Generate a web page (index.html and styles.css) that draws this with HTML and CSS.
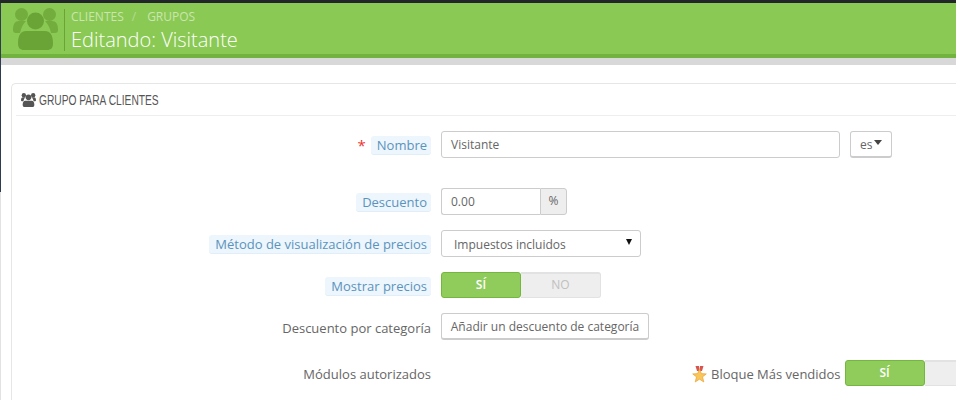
FILE: index.html
```html
<!DOCTYPE html>
<html lang="es">
<head>
<meta charset="utf-8">
<title>Editando: Visitante</title>
<link rel="stylesheet" href="styles.css">
</head>
<body>
<div class="page">
  <div class="edge"></div>
  <header class="head">
    <svg class="head-icon" viewBox="0 0 45 42" aria-hidden="true">
      <circle class="i2" cx="8.500" cy="6.500" r="6.500"/>
      <circle class="i2" cx="36.500" cy="6.500" r="6.500"/>
      <path class="i2" d="M0 22c0-6 2-9 6-9h7c-3 3-5 7-6 12H3c-2 0-3-1-3-3zM45 22c0-6-2-9-6-9h-7c3 3 5 7 6 12h4c2 0 3-1 3-3z"/>
      <circle class="i1" cx="22.500" cy="13" r="8.500"/>
      <path class="i1" d="M5 35c0-8 3-12 8-12h19c5 0 8 4 8 12 0 5-2 7-6 7H11c-4 0-6-2-6-7z"/>
    </svg>
    <div class="head-text">
      <div class="crumbs"><span>CLIENTES</span><span class="sep">/</span><span>GRUPOS</span></div>
      <h1>Editando: Visitante</h1>
    </div>
  </header>
  <div class="strip"></div>
  <section class="panel">
    <h2 class="panel-head">
      <svg class="small-icon" viewBox="0 0 45 42" aria-hidden="true">
        <circle cx="8.500" cy="6.500" r="6.500"/>
        <circle cx="36.500" cy="6.500" r="6.500"/>
        <path d="M0 22c0-6 2-9 6-9h7c-3 3-5 7-6 12H3c-2 0-3-1-3-3zM45 22c0-6-2-9-6-9h-7c3 3 5 7 6 12h4c2 0 3-1 3-3z"/>
        <circle cx="22.500" cy="13" r="8.500"/>
        <path d="M5 35c0-8 3-12 8-12h19c5 0 8 4 8 12 0 5-2 7-6 7H11c-4 0-6-2-6-7z"/>
      </svg>
      <span class="panel-title">GRUPO PARA CLIENTES</span>
    </h2>
    <div class="form">
      <div class="row row-name">
        <div class="label"><span class="req">*</span><span class="hint">Nombre</span></div>
        <div class="control">
          <div class="input input-name">Visitante</div>
          <div class="lang">es<span class="caret"></span></div>
        </div>
      </div>
      <div class="row row-disc">
        <div class="label"><span class="hint">Descuento</span></div>
        <div class="control">
          <div class="input input-disc">0.00</div><div class="addon">%</div>
        </div>
      </div>
      <div class="row row-method">
        <div class="label"><span class="hint">Método de visualización de precios</span></div>
        <div class="control">
          <div class="select">Impuestos incluidos<span class="select-caret"></span></div>
        </div>
      </div>
      <div class="row row-show">
        <div class="label"><span class="hint">Mostrar precios</span></div>
        <div class="control">
          <div class="toggle"><span class="on">SÍ</span><span class="off">NO</span></div>
        </div>
      </div>
      <div class="row row-cat">
        <div class="label">Descuento por categoría</div>
        <div class="control"><div class="btn">Añadir un descuento de categoría</div></div>
      </div>
      <div class="row row-mod">
        <div class="label">Módulos autorizados</div>
        <div class="control module">
          <svg class="medal" viewBox="0 0 15 17" aria-hidden="true">
            <path fill="#d9534f" d="M3.500 0h3.500l.5 5H5zM8 0h3.500L10 5H7.500z"/>
            <path fill="#f9c65a" stroke="#e8a33a" stroke-width=".7" d="M7.500 3l1.900 4.600 4.900.3-3.800 3 1.300 5.100-4.300-2.800-4.300 2.800 1.300-5.100-3.800-3 4.900-.3z"/>
          </svg>
          <span class="module-name">Bloque Más vendidos</span>
          <div class="toggle toggle-cut"><span class="on">SÍ</span><span class="off"></span></div>
        </div>
      </div>
    </div>
  </section>
</div>
</body>
</html>
```
FILE: styles.css
```css
* { box-sizing: border-box; }
html, body { margin: 0; height: 400px; overflow: hidden; background: #fff; }
body { font-family: "Open Sans", sans-serif; font-size: 12px; color: #666; border-top: 3px solid #22262b; }
.page { width: 956px; position: relative; }
.edge {
  position: absolute;
  left: 0;
  top: 0;
  width: 1px;
  height: 397px;
  background: linear-gradient(#2f3b4f 0 189px, #e2e2e2 189px);
}
.head {
  height: 55px;
  background: #8bc955;
  border-bottom: 4px solid #72b23e;
  display: flex;
  align-items: flex-start;
  padding: 5px 0 0 13px;
}
.head-icon { width: 45px; height: 42px; flex: none; }
.i1 { fill: #6aa437; }
.i2 { fill: #72ad3e; }
.head-text { margin-left: 6px; border-left: 1px solid #6aa437; height: 42px; padding-left: 6px; margin-top: 1px; }
.crumbs { font-size: 12px; line-height: 16px; color: #c9e6ae; }
.sep { margin: 0 11px 0 8px; color: #b5db92; }
h1 { margin: 3px 0 0; font-size: 20px; line-height: 24px; font-weight: 300; color: #fff; white-space: nowrap; }
.strip { height: 7px; background: #d8d8d8; }
.panel {
  margin: 18px 0 0 11px;
  background: #fff;
  border: 1px solid #e6e6e6;
  border-right: 0;
  border-radius: 5px 0 0 5px;
  padding: 0 0 0 4px;
  height: 330px;
}
.panel-head {
  margin: 0;
  height: 32px;
  border-bottom: 1px solid #eee;
  display: flex;
  align-items: center;
  gap: 3px;
  font-weight: 400;
  color: #555;
  padding-left: 5px;
}
.panel-title {
  font-family: "Liberation Sans", sans-serif;
  font-size: 14px;
  white-space: nowrap;
  transform: scaleX(.73);
  transform-origin: left center;
}
.small-icon { width: 15px; height: 14px; fill: #555; flex: none; }
.form { display: flex; flex-direction: column; }
.row { display: flex; align-items: center; }
.label { width: 415px; padding-top: 2px; text-align: right; font-size: 13px; color: #666; flex: none; display: flex; justify-content: flex-end; align-items: center; }
.control { margin-left: 10px; display: flex; align-items: center; }
.hint {
  background: #edf6fc;
  border-bottom: 1px solid #dfeef8;
  color: #5b93bd;
  padding: 0 4px 0 6px;
  border-radius: 3px;
  height: 19px;
  line-height: 18px;
  font-size: 13px;
  display: block;
}
.req { color: #e33; font-size: 15px; margin-right: 5px; line-height: 15px; }
.row-name { margin-top: 15px; height: 27px; }
.row-disc { margin-top: 30px; height: 27px; }
.row-method { margin-top: 15px; height: 27px; }
.row-show { margin-top: 15px; height: 26px; }
.row-cat { margin-top: 15px; height: 27px; }
.row-mod { margin-top: 20px; height: 26px; }
.input {
  height: 27px;
  border: 1px solid #ccc;
  border-radius: 3px;
  padding: 0 9px;
  line-height: 25px;
  font-size: 12px;
  background: #fff;
}
.input-name { width: 399px; }
.lang {
  width: 42px;
  height: 27px;
  margin-left: 10px;
  border: 1px solid #ccc;
  border-bottom-width: 2px;
  border-radius: 3px;
  padding-left: 9px;
  display: flex;
  align-items: center;
  gap: 2px;
}
.caret { width: 0; height: 0; border-left: 4px solid transparent; border-right: 4px solid transparent; border-top: 5px solid #444; margin-top: -4px; }
.input-disc { width: 99px; border-radius: 3px 0 0 3px; border-right: 0; }
.addon {
  width: 27px;
  height: 27px;
  border: 1px solid #ccc;
  border-radius: 0 3px 3px 0;
  background: #eee;
  text-align: center;
  line-height: 24px;
  font-size: 12px;
}
.select {
  width: 200px;
  height: 27px;
  border: 1px solid #ccc;
  border-radius: 3px;
  padding-left: 12px;
  line-height: 27px;
  font-size: 12px;
  position: relative;
}
.select-caret { position: absolute; right: 8px; top: 8px; width: 0; height: 0; border-left: 3.500px solid transparent; border-right: 3.500px solid transparent; border-top: 6px solid #111; }
.toggle { display: flex; width: 160px; height: 26px; font-size: 12px; font-weight: 600; line-height: 24px; text-align: center; flex: none; }
.toggle-cut { width: 111px; }
.toggle-cut .off { width: 31px; border-right: 0; border-radius: 0; }
.on { width: 80px; background: #8fcc5c; border: 1px solid #74b73f; border-radius: 3px; color: #fff; }
.off { width: 80px; background: #eee; border-top: 2px solid #e2e2e2; border-right: 1px solid #e2e2e2; border-bottom: 1px solid #e2e2e2; border-radius: 0 3px 3px 0; color: #c0c0c0; font-weight: 400; line-height: 22px; }
.btn {
  width: 208px;
  height: 27px;
  border: 1px solid #ccc;
  border-bottom-width: 2px;
  border-radius: 3px;
  text-align: center;
  line-height: 25px;
  font-size: 12px;
  white-space: nowrap;
}
.module { margin-left: 261px; }
.medal { width: 15px; height: 17px; margin: 2px 4px 0 0; flex: none; }
.module-name { font-size: 13px; margin-right: 4px; padding-top: 2px; white-space: nowrap; }
```
